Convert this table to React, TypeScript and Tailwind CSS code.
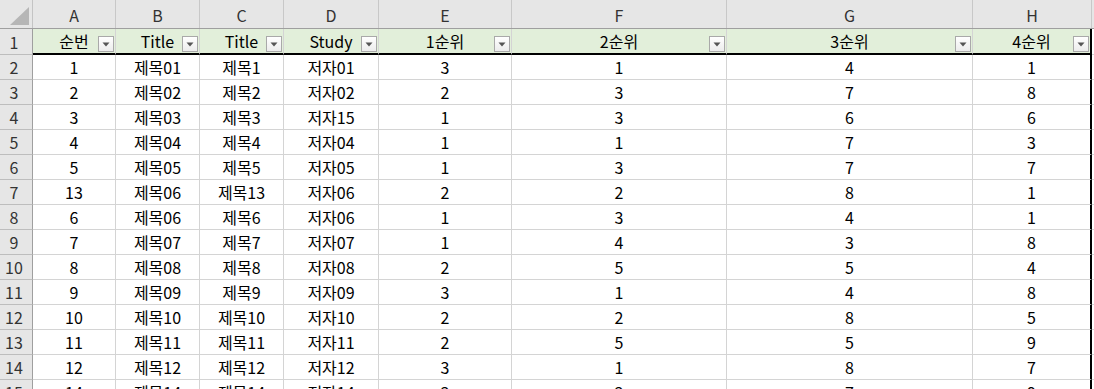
import React from 'react';

const colW = [
  'w-[83px]',
  'w-[84px]',
  'w-[84px]',
  'w-[95px]',
  'w-[133px]',
  'w-[215px]',
  'w-[246px]',
  'w-[119px]',
];

const letters = ['A', 'B', 'C', 'D', 'E', 'F', 'G', 'H'];
const heads = ['순번', 'Title', 'Title', 'Study', '1순위', '2순위', '3순위', '4순위'];

const rows: (string | number)[][] = [
  [1, '제목01', '제목1', '저자01', 3, 1, 4, 1],
  [2, '제목02', '제목2', '저자02', 2, 3, 7, 8],
  [3, '제목03', '제목3', '저자15', 1, 3, 6, 6],
  [4, '제목04', '제목4', '저자04', 1, 1, 7, 3],
  [5, '제목05', '제목5', '저자05', 1, 3, 7, 7],
  [13, '제목06', '제목13', '저자06', 2, 2, 8, 1],
  [6, '제목06', '제목6', '저자06', 1, 3, 4, 1],
  [7, '제목07', '제목7', '저자07', 1, 4, 3, 8],
  [8, '제목08', '제목8', '저자08', 2, 5, 5, 4],
  [9, '제목09', '제목9', '저자09', 3, 1, 4, 8],
  [10, '제목10', '제목10', '저자10', 2, 2, 8, 5],
  [11, '제목11', '제목11', '저자11', 2, 5, 5, 9],
  [12, '제목12', '제목12', '저자12', 3, 1, 8, 7],
  [14, '제목14', '제목14', '저자14', 3, 3, 7, 9],
];

const FilterButton = () => (
  <div className="absolute right-[1px] bottom-[1px] w-[16px] h-[16px] border border-[#a9a9a9] bg-gradient-to-b from-white to-[#ececec] flex items-center justify-center">
    <svg width="8" height="5" viewBox="0 0 8 5">
      <path d="M0.5 0.5 L7.5 0.5 L4 4.5 Z" fill="#555555" />
    </svg>
  </div>
);

const App = () => {
  return (
    <div
      className="w-[1094px] h-[389px] overflow-hidden bg-white text-[16px] leading-none text-black"
      style={{ fontFamily: '"Noto Sans CJK KR", "Noto Sans", sans-serif' }}
    >
      {/* column letters */}
      <div className="flex h-[29px] bg-[#e6e6e6] border-b border-[#9f9f9f] text-[#333]">
        <div className="w-[33px] shrink-0 border-r border-[#c4c4c4] relative">
          <svg className="absolute right-[3px] bottom-[3px]" width="19" height="18" viewBox="0 0 19 18">
            <path d="M19 0 L19 18 L0 18 Z" fill="#b6b6b6" />
          </svg>
        </div>
        {letters.map((l, i) => (
          <div
            key={l}
            className={`${colW[i]} shrink-0 border-r border-[#c8c8c8] flex items-center justify-center pt-[1px]`}
          >
            {l}
          </div>
        ))}
        <div className="flex-1" />
      </div>

      {/* row 1: table header */}
      <div className="flex h-[26px]">
        <div className="w-[33px] shrink-0 bg-[#e6e6e6] border-r border-[#9f9f9f] border-b border-b-[#bdbdbd] flex items-center justify-center pr-[4px] text-[#333]">
          1
        </div>
        {heads.map((h, i) => (
          <div
            key={i}
            className={`${colW[i]} shrink-0 relative bg-[#e2efda] border-b-2 border-b-black ${
              i === 7 ? 'border-r-2 border-r-black' : 'border-r border-r-[#d4d4d4]'
            } flex items-center justify-center`}
          >
            {h}
            <FilterButton />
          </div>
        ))}
        <div className="flex-1 border-b border-[#d4d4d4]" />
      </div>

      {/* data rows */}
      {rows.map((r, ri) => (
        <div key={ri} className="flex h-[25px]">
          <div className="w-[33px] shrink-0 bg-[#e6e6e6] border-r border-[#9f9f9f] border-b border-b-[#bdbdbd] flex items-center justify-center pr-[4px] text-[#333]">
            {ri + 2}
          </div>
          {r.map((v, i) => (
            <div
              key={i}
              className={`${colW[i]} shrink-0 border-b border-b-[#d4d4d4] ${
                i === 7 ? 'border-r-2 border-r-black' : 'border-r border-r-[#d4d4d4]'
              } flex items-center justify-center`}
            >
              {v}
            </div>
          ))}
          <div className="flex-1 border-b border-[#d4d4d4]" />
        </div>
      ))}
    </div>
  );
};

export default App;
